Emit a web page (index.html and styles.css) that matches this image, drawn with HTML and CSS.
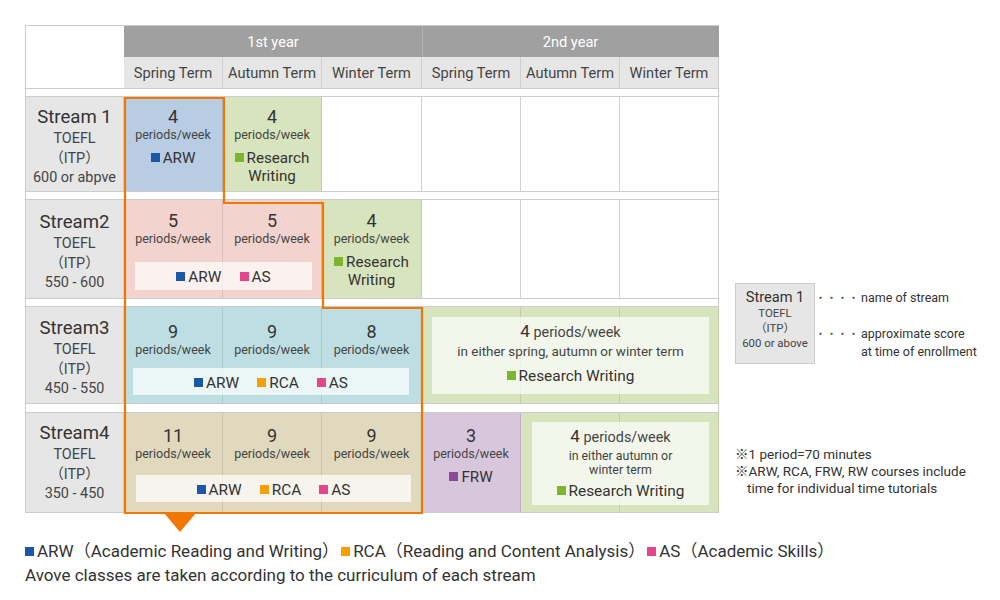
FILE: index.html
```html
<!DOCTYPE html>
<html lang="en">
<head>
<meta charset="utf-8">
<title>Curriculum</title>
<link rel="stylesheet" href="styles.css">
</head>
<body>
<div class="page">
  <div class="top">
    <div class="chart">
      <div class="cols head">
        <div class="corner"></div>
        <div class="year">1st year</div>
        <div class="year y2">2nd year</div>
        <div class="term">Spring Term</div>
        <div class="term">Autumn Term</div>
        <div class="term">Winter Term</div>
        <div class="term">Spring Term</div>
        <div class="term">Autumn Term</div>
        <div class="term">Winter Term</div>
      </div>
      <div class="gap"></div>

      <div class="cols row r1">
        <div class="cell label c1"><div class="sname">Stream 1</div><div class="sub">TOEFL</div><div class="sub">（ITP）</div><div class="sub">600 or abpve</div></div>
        <div class="cell blue c2"><div class="num">4</div><div class="per">periods/week</div><div class="course"><span class="tag arw">ARW</span></div></div>
        <div class="cell green c3"><div class="num">4</div><div class="per">periods/week</div><div class="course"><span class="tag rw">Research</span><br>Writing</div></div>
        <div class="cell c4"></div>
        <div class="cell c5"></div>
        <div class="cell c6"></div>
        <div class="cell c7"></div>
      </div>
      <div class="gap"></div>

      <div class="cols row r2">
        <div class="cell label c1"><div class="sname">Stream2</div><div class="sub">TOEFL</div><div class="sub">（ITP）</div><div class="sub">550 - 600</div></div>
        <div class="cell pink c2"><div class="num">5</div><div class="per">periods/week</div></div>
        <div class="cell pink c3"><div class="num">5</div><div class="per">periods/week</div></div>
        <div class="cell green c4"><div class="num">4</div><div class="per">periods/week</div><div class="course"><span class="tag rw">Research</span><br>Writing</div></div>
        <div class="cell c5"></div>
        <div class="cell c6"></div>
        <div class="cell c7"></div>
        <div class="box box-s2"><span class="tag arw">ARW</span><span class="tag as">AS</span></div>
      </div>
      <div class="gap"></div>

      <div class="cols row r3">
        <div class="cell label c1"><div class="sname">Stream3</div><div class="sub">TOEFL</div><div class="sub">（ITP）</div><div class="sub">450 - 550</div></div>
        <div class="cell teal c2"><div class="num">9</div><div class="per">periods/week</div></div>
        <div class="cell teal c3"><div class="num">9</div><div class="per">periods/week</div></div>
        <div class="cell teal c4"><div class="num">8</div><div class="per">periods/week</div></div>
        <div class="cell green c5"></div>
        <div class="cell green c6"></div>
        <div class="cell green c7"></div>
        <div class="box box-s3"><span class="tag arw">ARW</span><span class="tag rca">RCA</span><span class="tag as">AS</span></div>
        <div class="box rwbox rw-s3">
          <div class="rwhead"><span class="bignum">4</span> periods/week</div>
          <div class="rwnote">in either spring, autumn or winter term</div>
          <div class="rwcourse"><span class="tag rw">Research Writing</span></div>
        </div>
      </div>
      <div class="gap g9"></div>

      <div class="cols row r4">
        <div class="cell label c1"><div class="sname">Stream4</div><div class="sub">TOEFL</div><div class="sub">（ITP）</div><div class="sub">350 - 450</div></div>
        <div class="cell beige c2"><div class="num">11</div><div class="per">periods/week</div></div>
        <div class="cell beige c3"><div class="num">9</div><div class="per">periods/week</div></div>
        <div class="cell beige c4"><div class="num">9</div><div class="per">periods/week</div></div>
        <div class="cell purple c5"><div class="num">3</div><div class="per">periods/week</div><div class="course"><span class="tag frw">FRW</span></div></div>
        <div class="cell green c6"></div>
        <div class="cell green c7"></div>
        <div class="box box-s4"><span class="tag arw">ARW</span><span class="tag rca">RCA</span><span class="tag as">AS</span></div>
        <div class="box rwbox rw-s4">
          <div class="rwhead"><span class="bignum">4</span> periods/week</div>
          <div class="rwnote">in either autumn or<br>winter term</div>
          <div class="rwcourse"><span class="tag rw">Research Writing</span></div>
        </div>
      </div>

      <svg class="outline" width="700" height="520" viewBox="0 0 700 520" aria-hidden="true">
        <path d="M99 72 H198 V177 H297 V282 H396 V487 H99 Z" fill="none" stroke="#f07800" stroke-width="2.2"/>
        <path d="M138 487 H170 L154 506 Z" fill="#f07800"/>
      </svg>
    </div>

    <aside class="side">
      <div class="key">
        <div class="keybox">
          <div class="kname">Stream 1</div>
          <div class="ksub">TOEFL</div>
          <div class="ksub">（ITP）</div>
          <div class="ksub">600 or above</div>
        </div>
        <div class="keytext">
          <div class="kline k1"><span class="dots">・・・・</span>name of stream</div>
          <div class="kline k2"><span class="dots">・・・・</span>approximate score</div>
          <div class="kline k3">at time of enrollment</div>
        </div>
      </div>
      <div class="notes">
        <div>※1 period=70 minutes</div>
        <div>※ARW, RCA, FRW, RW courses include</div>
        <div class="indent">time for individual time tutorials</div>
      </div>
    </aside>
  </div>

  <div class="legend">
    <div><span class="tag arw">ARW（Academic Reading and Writing）</span><span class="tag rca">RCA（Reading and Content Analysis）</span><span class="tag as">AS（Academic Skills）</span></div>
    <div>Avove classes are taken according to the curriculum of each stream</div>
  </div>
</div>
</body>
</html>
```

FILE: styles.css
```css
body {
  margin: 0;
  background: #fff;
  color: #333;
  font-family: Roboto, "Noto Sans CJK JP", sans-serif;
}

.page {
  padding: 25px 0 0 25px;
}

.top {
  display: flex;
  align-items: flex-start;
}

.chart {
  position: relative;
  width: 693px;
  border-left: 1px solid #ccc;
  border-top: 1px solid #ccc;
}

.cols {
  display: grid;
  grid-template-columns: 98px 99px 99px 100px 99px 99px 99px;
}

.head {
  grid-template-rows: 31px 32px;
}

.corner {
  grid-row: 1 / 3;
  grid-column: 1;
  background: #fff;
  border-bottom: 1px solid #ccc;
}

.year {
  grid-column: span 3;
  background: #a0a0a0;
  color: #fff;
  font-size: 14.6px;
  display: flex;
  align-items: center;
  justify-content: center;
}

.y2 {
  box-shadow: inset 1px 0 0 #b2b2b2;
}

.term {
  background: #e6e6e6;
  border-right: 1px solid #cfcfcf;
  border-bottom: 1px solid #ccc;
  color: #444;
  font-size: 14.6px;
  display: flex;
  align-items: center;
  justify-content: center;
}

.gap {
  height: 7px;
  border-bottom: 1px solid #ccc;
  border-right: 1px solid #ccc;
}

.gap.g9 {
  height: 8px;
}

.r1 { height: 95px; }
.r2 { height: 99px; }
.r3 { height: 97px; }
.r4 { height: 100px; }

.row > * {
  grid-row: 1;
  box-sizing: border-box;
}

.c1 { grid-column: 1; }
.c2 { grid-column: 2; }
.c3 { grid-column: 3; }
.c4 { grid-column: 4; }
.c5 { grid-column: 5; }
.c6 { grid-column: 6; }
.c7 { grid-column: 7; }

.cell {
  border-right: 1px solid #d2d2d2;
  border-bottom: 1px solid #ccc;
  text-align: center;
  padding-top: 10px;
}

.r2 .cell { padding-top: 11px; }
.r3 .cell { padding-top: 15px; }
.r4 .cell { padding-top: 13px; }

.r1 .label { padding-top: 9px; }
.r2 .label { padding-top: 11px; }
.r3 .label { padding-top: 10px; }
.r4 .label { padding-top: 9px; }

.label { background: #e6e6e6; color: #333; }
.blue { background: #b8cce4; border-right-color: rgba(0, 0, 0, 0.1); }
.green { background: #d8e4bd; border-right-color: rgba(0, 0, 0, 0.1); }
.pink { background: #f2d3ce; border-right-color: rgba(0, 0, 0, 0.1); }
.teal { background: #bddfe3; border-right-color: rgba(0, 0, 0, 0.1); }
.beige { background: #e0d9be; border-right-color: rgba(0, 0, 0, 0.1); }
.purple { background: #d8c6dd; border-right-color: rgba(0, 0, 0, 0.1); }

.sname {
  font-size: 18.6px;
  line-height: 22px;
}

.sub {
  font-size: 14.4px;
  line-height: 19.5px;
  color: #444;
}

.sname + .sub {
  margin-top: 1px;
}

.num {
  font-size: 18px;
  line-height: 20px;
}

.per {
  font-size: 12.5px;
  line-height: 16px;
  color: #444;
}

.course {
  margin-top: 6px;
  font-size: 15.2px;
  line-height: 18px;
}

.tag::before {
  content: "";
  display: inline-block;
  width: 9px;
  height: 9px;
  margin-right: 3px;
  vertical-align: 1px;
  background: #1a57a8;
}

.tag.arw::before { background: #1a57a8; }
.tag.rw::before { background: #7bb62c; }
.tag.as::before { background: #e5458b; }
.tag.rca::before { background: #f5a000; }
.tag.frw::before { background: #8b4a96; }

.box {
  background: rgba(255, 255, 255, 0.7);
  display: flex;
  align-items: center;
  justify-content: center;
  gap: 18px;
  font-size: 15.4px;
  color: #333;
}

.box-s2,
.box-s3,
.box-s4 {
  box-sizing: border-box;
  padding-top: 2px;
}

.box-s2 {
  grid-column: 2 / 4;
  align-self: end;
  height: 28px;
  margin: 0 10px 9px 11px;
}

.box-s3 {
  grid-column: 2 / 5;
  align-self: end;
  height: 27px;
  margin: 0 13px 9px 9px;
}

.box-s4 {
  grid-column: 2 / 5;
  align-self: end;
  height: 27px;
  margin: 0 11px 11px 12px;
}

.rwbox {
  flex-direction: column;
  justify-content: flex-start;
  gap: 0;
  text-align: center;
  padding-top: 4px;
}

.rw-s3 {
  grid-column: 5 / 8;
  margin: 10px 10px 10px 10px;
}

.rw-s4 {
  grid-column: 6 / 8;
  margin: 9px 10px 8px 11px;
}

.rwhead {
  font-size: 14.4px;
  line-height: 20px;
  color: #444;
}

.bignum {
  font-size: 17px;
  color: #333;
}

.rwnote {
  font-size: 12.4px;
  line-height: 14px;
  color: #444;
}

.rw-s3 .rwnote {
  font-size: 13.4px;
  line-height: 16px;
  margin-top: 1px;
}

.rw-s4 .rwnote {
  margin-top: 1px;
}

.rwcourse {
  margin-top: 6px;
  font-size: 15.4px;
  line-height: 20px;
}

.rw-s4 .rwcourse {
  margin-top: 4px;
}

.outline {
  position: absolute;
  left: 0;
  top: 0;
  overflow: visible;
  pointer-events: none;
}

.side {
  margin-left: 16px;
  padding-top: 258px;
  color: #333;
}

.key {
  display: flex;
  align-items: flex-start;
}

.keybox {
  width: 78px;
  height: 75px;
  background: #e6e6e6;
  border: 1px solid #ccc;
  text-align: center;
  padding-top: 4px;
  box-sizing: content-box;
}

.kname {
  font-size: 14.6px;
  line-height: 18px;
}

.ksub {
  font-size: 11.4px;
  line-height: 15px;
  color: #444;
}

.keytext {
  font-size: 12.5px;
  padding-top: 6px;
}

.kline {
  line-height: 17px;
  white-space: nowrap;
}

.k2 {
  margin-top: 18px;
}

.k3 {
  padding-left: 46px;
}

.dots {
  display: inline-block;
  width: 46px;
  font-size: 11px;
  color: #555;
}

.notes {
  margin-top: 82px;
  font-size: 13.5px;
  line-height: 17px;
  white-space: nowrap;
}

.indent {
  padding-left: 12px;
}

.legend {
  margin-top: 26px;
  font-size: 17px;
  line-height: 24px;
  color: #333;
}

.legend .tag {
  margin-right: 2px;
}
```
